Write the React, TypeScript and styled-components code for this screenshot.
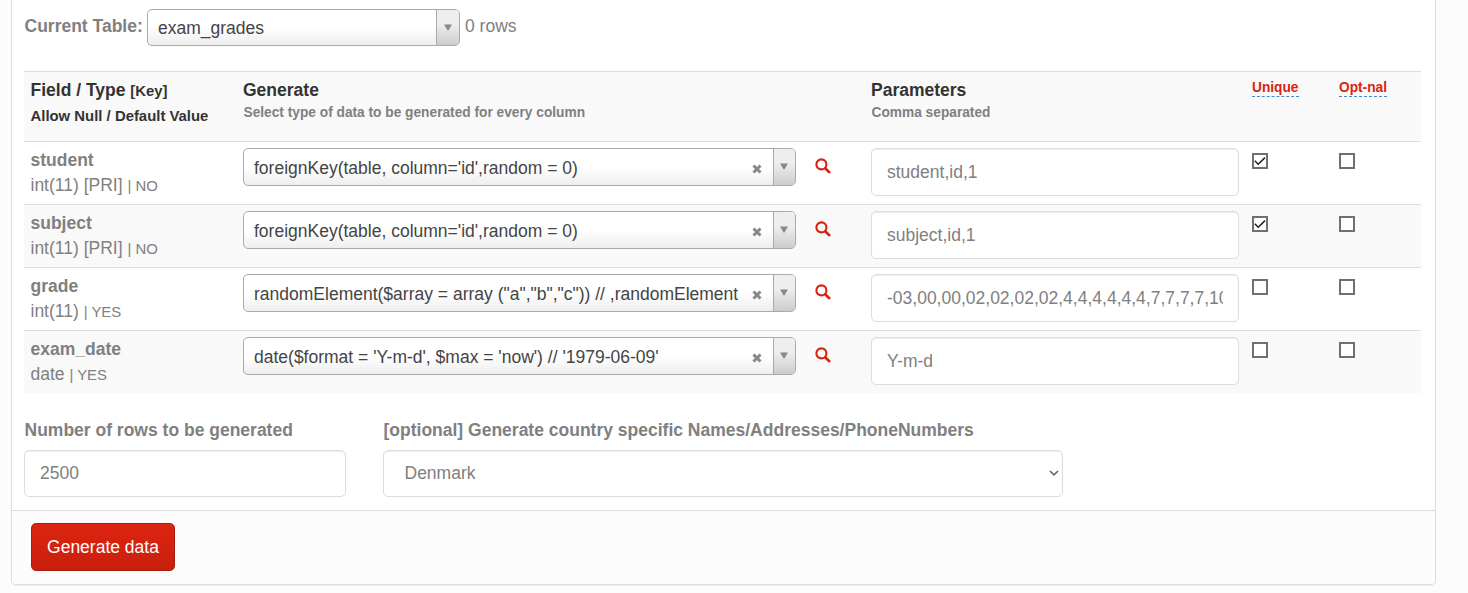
import React from "react";
import styled, { createGlobalStyle } from "styled-components";

const GlobalStyle = createGlobalStyle`
  * { box-sizing: border-box; }
  body {
    margin: 0;
    background: #fcfcfc;
    color: #808080;
    font: 17.5px/25px "Liberation Sans", Arial, sans-serif;
    overflow: hidden;
  }
`;

const Page = styled.div`
  height: 593px;
  padding: 0 32px 8px 11px;
`;
const Panel = styled.div`
  height: 585px;
  display: flex;
  flex-direction: column;
  background: #fff;
  border: 1px solid #dddddd;
  border-top: 0;
  border-radius: 0 0 5px 5px;
  box-shadow: 0 1px 1px rgba(0, 0, 0, 0.05);
`;
const Body = styled.div`
  height: 510px;
  padding: 9px 14px 0 12px;
  white-space: nowrap;
`;
const TableBar = styled.div`
  display: flex;
  align-items: flex-start;
  height: 62px;
`;
const BarText = styled.span<{ $bold?: boolean; $width?: number }>`
  width: ${(p) => (p.$width ? `${p.$width}px` : "auto")};
  padding-top: 5px;
  padding-left: ${(p) => (p.$bold ? 0.5 : 5)}px;
  font-weight: ${(p) => (p.$bold ? 700 : 400)};
`;

const Chosen = styled.div<{ $width: number; $height: number }>`
  display: flex;
  width: ${(p) => p.$width}px;
  height: ${(p) => p.$height}px;
  border: 1px solid #aaa;
  border-radius: 5px;
  overflow: hidden;
  background: linear-gradient(to top, #eee 0%, #fff 50%);
  color: #444;
`;
const ChosenText = styled.span<{ $line: number }>`
  flex: 1;
  min-width: 0;
  padding-left: 10px;
  line-height: ${(p) => p.$line}px;
  overflow: hidden;
`;
const Clear = styled.svg`
  width: 10px;
  height: 10px;
  margin: 14.5px 11.5px 0 13.5px;
`;
const Arrow = styled.div<{ $width: number }>`
  width: ${(p) => p.$width}px;
  border-left: 1px solid #aaa;
  background: linear-gradient(to top, #ccc 0%, #eee 60%);
  svg { display: block; margin: 14px 0 0 ${(p) => p.$width - 16.5}px; }
`;

const GridRow = styled.div<{ $head?: boolean; $shaded?: boolean }>`
  display: grid;
  grid-template-columns: 219px 572px 56px 381px 87px 82px;
  height: ${(p) => (p.$head ? 70 : 63)}px;
  border-top: 1px solid #dddddd;
  background: ${(p) => (p.$shaded ? "#f9f9f9" : "#fff")};
  padding-top: 6px;
`;
const Field = styled.div`
  padding-left: 6.5px;
`;
const Name = styled.div`
  font-weight: 700;
`;
const Small = styled.span`
  font-size: 14.9px;
`;
const Heading = styled.div<{ $sub?: boolean }>`
  color: #333;
  font-weight: 700;
  font-size: ${(p) => (p.$sub ? 14.9 : 17.5)}px;
`;
const Hint = styled.div`
  padding-left: 0.5px;
  font-size: 13.72px;
  font-weight: 700;
  line-height: 19px;
`;
const Tip = styled.span`
  display: block;
  width: fit-content;
  height: 19px;
  line-height: 19px;
  border-bottom: 1px dashed #428bca;
  color: #d9230f;
  font-size: 13.72px;
  font-weight: 700;
`;
const Magnifier = styled.svg`
  width: 16px;
  height: 16px;
  margin: 9.5px 0 0 -0.5px;
`;
const TextInput = styled.input<{ $width: number; $height?: number }>`
  display: block;
  width: ${(p) => p.$width}px;
  height: ${(p) => p.$height ?? 48}px;
  padding: 0 15px;
  border: 1px solid #ddd;
  border-radius: 5px;
  background: #fff;
  box-shadow: inset 0 1px 1px rgba(0, 0, 0, 0.075);
  color: #808080;
  font: inherit;
  outline: 0;
`;
const Check = styled.span`
  display: block;
  width: 16px;
  height: 16px;
  margin: 5px 0 0;
  border: 2px solid #707070;
  background: #fff;
  svg { display: block; }
`;

const Options = styled.div`
  display: grid;
  grid-template-columns: 359px 680px;
  padding-top: 25px;
`;
const Label = styled.label`
  display: block;
  height: 32px;
  padding-left: 0.5px;
  font-weight: 700;
`;
const Country = styled.div`
  display: flex;
  align-items: center;
  justify-content: space-between;
  width: 680px;
  height: 47px;
  padding: 0 3px 0 20.5px;
  border: 1px solid #ddd;
  border-radius: 5px;
  box-shadow: inset 0 1px 1px rgba(0, 0, 0, 0.075);
  svg { margin-top: -1px; }
`;
const Footer = styled.div`
  flex: 1;
  padding: 12px 19px;
  border-top: 1px solid #dddddd;
  border-radius: 0 0 4px 4px;
  background: #fcfcfc;
`;
const Submit = styled.button`
  width: 144px;
  height: 48px;
  padding: 0;
  border: 1px solid #a91b0c;
  border-radius: 5px;
  background: linear-gradient(#dc2410, #c9200e);
  color: #fff;
  font: inherit;
`;

function Select({ text, width, height = 38, clearable = false }: { text: string; width: number; height?: number; clearable?: boolean }) {
  return (
    <Chosen $width={width} $height={height}>
      <ChosenText $line={clearable ? 38 : 36}>{text}</ChosenText>
      {clearable && (
        <Clear viewBox="0 0 10 10">
          <path d="M1.5 1.5 8.5 8.5M8.5 1.5 1.5 8.5" stroke="#888" strokeWidth="3" />
        </Clear>
      )}
      <Arrow $width={clearable ? 22 : 23}>
        <svg width="8" height="8" viewBox="0 0 8 8"><path d="M0 0.5h8L4 7z" fill="#888" /></svg>
      </Arrow>
    </Chosen>
  );
}

function Checkbox({ checked }: { checked: boolean }) {
  return (
    <Check>
      {checked && (
        <svg width="12" height="12" viewBox="0 0 12 12">
          <path d="M0.8 5.8 4.2 9.2 11 2.6" fill="none" stroke="#222" strokeWidth="1.5" />
        </svg>
      )}
    </Check>
  );
}

const rows = [
  { name: "student", type: "int(11) [PRI]", nullable: "NO", generator: "foreignKey(table, column='id',random = 0)", params: "student,id,1", unique: true },
  { name: "subject", type: "int(11) [PRI]", nullable: "NO", generator: "foreignKey(table, column='id',random = 0)", params: "subject,id,1", unique: true },
  { name: "grade", type: "int(11)", nullable: "YES", generator: "randomElement($array = array (\"a\",\"b\",\"c\")) // ,randomElement", params: "-03,00,00,02,02,02,02,4,4,4,4,4,4,7,7,7,7,10,10,12", unique: false },
  { name: "exam_date", type: "date", nullable: "YES", generator: "date($format = 'Y-m-d', $max = 'now') // '1979-06-09'", params: "Y-m-d", unique: false },
];

export default function App() {
  return (
    <Page>
      <GlobalStyle />
      <Panel>
        <Body>
          <TableBar>
            <BarText $bold $width={123}>Current Table:</BarText>
            <Select text="exam_grades" width={313} height={37} />
            <BarText>0 rows</BarText>
          </TableBar>
          <GridRow $head $shaded>
            <Field>
              <Heading>Field / Type <Small>[Key]</Small></Heading>
              <Heading $sub>Allow Null / Default Value</Heading>
            </Field>
            <div>
              <Heading>Generate</Heading>
              <Hint>Select type of data to be generated for every column</Hint>
            </div>
            <div />
            <div>
              <Heading>Parameters</Heading>
              <Hint>Comma separated</Hint>
            </div>
            <div><Tip>Unique</Tip></div>
            <div><Tip>Opt-nal</Tip></div>
          </GridRow>
          {rows.map((row, i) => (
            <GridRow key={row.name} $shaded={i % 2 === 1}>
              <Field>
                <Name>{row.name}</Name>
                <div>{row.type} <Small>| {row.nullable}</Small></div>
              </Field>
              <Select text={row.generator} width={553} clearable />
              <Magnifier viewBox="0 0 16 16">
                <circle cx="6.4" cy="6.4" r="5" fill="none" stroke="#d9230f" strokeWidth="2.1" />
                <path d="M10.2 10.2 14.3 14.2" stroke="#d9230f" strokeWidth="2.6" strokeLinecap="round" />
              </Magnifier>
              <TextInput $width={368} defaultValue={row.params} />
              <Checkbox checked={row.unique} />
              <Checkbox checked={false} />
            </GridRow>
          ))}
          <Options>
            <div>
              <Label>Number of rows to be generated</Label>
              <TextInput $width={322} $height={47} defaultValue="2500" />
            </div>
            <div>
              <Label>[optional] Generate country specific Names/Addresses/PhoneNumbers</Label>
              <Country>
                Denmark
                <svg width="10" height="8" viewBox="0 0 10 8"><path d="M1 2l4 3.8L9 2" fill="none" stroke="#666" strokeWidth="1.6" /></svg>
              </Country>
            </div>
          </Options>
        </Body>
        <Footer><Submit>Generate data</Submit></Footer>
      </Panel>
    </Page>
  );
}
